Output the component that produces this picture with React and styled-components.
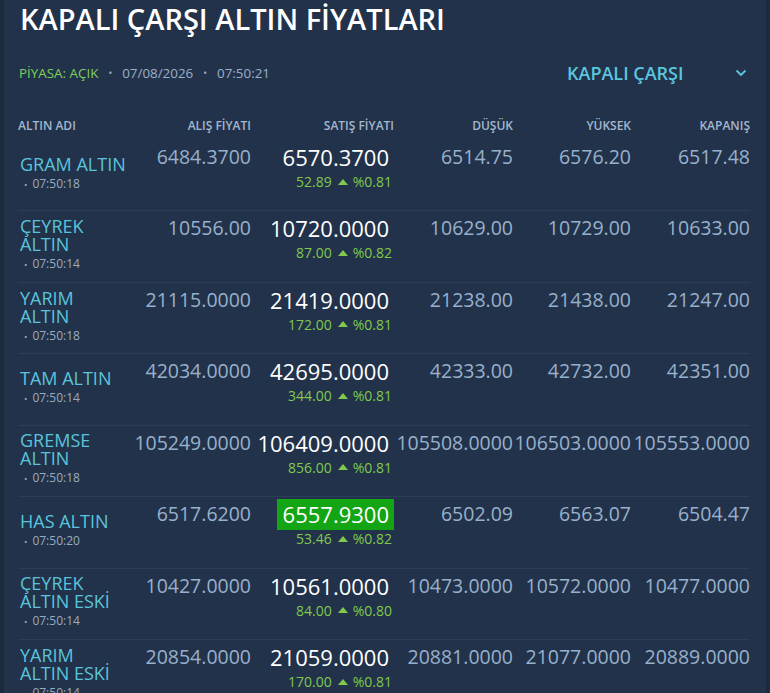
import React from 'react';
import styled, { createGlobalStyle } from 'styled-components';

const GlobalStyle = createGlobalStyle`
  html, body {
    margin: 0;
    padding: 0;
    background-color: #1d2a3d;
  }
  body {
    font-family: "Open Sans", "Noto Sans", sans-serif;
  }
`;

const Panel = styled.div`
  margin: 0 4px;
  padding: 0 16px 0 14px;
  min-height: 100vh;
  background-color: #22324a;
`;

const Title = styled.h1`
  margin: 0;
  padding-left: 2px;
  font-size: 29px;
  line-height: 38px;
  font-weight: 600;
  color: #ffffff;
`;

const StatusBar = styled.div`
  display: flex;
  align-items: center;
  justify-content: space-between;
  margin-top: 26px;
  height: 18px;
`;

const Status = styled.div`
  display: flex;
  align-items: center;
  padding-left: 1px;
  font-size: 13.4px;
  line-height: 18px;
  color: #9bb0c8;
`;

const Open = styled.span`
  color: #7fd05a;
`;

const Dot = styled.span`
  margin: 0 10px;
  font-size: 10px;
`;

const Select = styled.div`
  display: flex;
  align-items: center;
  justify-content: space-between;
  width: 180px;
  padding-right: 3px;
  font-size: 18px;
  font-weight: 600;
  color: #5ac6df;
`;

const Head = styled.div`
  display: grid;
  grid-template-columns: 115px 118px 143px 119px 118px 119px;
  margin-top: 36px;
  padding-bottom: 6px;
`;

const HeadCell = styled.div`
  font-size: 12px;
  line-height: 16px;
  font-weight: 600;
  color: #a3b7cf;
  text-align: ${(p) => (p.left ? 'left' : 'right')};
`;

const Row = styled.div`
  display: grid;
  grid-template-columns: 115px 118px 143px 119px 118px 119px;
  align-items: start;
  box-sizing: border-box;
  height: 71.45px;
  padding-top: 2px;
  border-bottom: 1px solid #2c3e57;
`;

const NameCell = styled.div`
  align-self: center;
  padding: 0 6px 0 2px;
  margin-top: -2px;
`;

const Name = styled.div`
  font-size: 18px;
  line-height: 18px;
  color: #5ac4dc;
`;

const Time = styled.div`
  font-size: 12px;
  line-height: 22px;
  color: #9aabbf;
  padding-left: 4px;

  &::before {
    content: '•';
    font-size: 9px;
    margin-right: 5px;
  }
`;

const Value = styled.div`
  font-size: 19.5px;
  line-height: 30px;
  color: #98b0cb;
  text-align: right;
  white-space: nowrap;
`;

const SellCell = styled.div`
  display: flex;
  flex-direction: column;
  align-items: flex-end;
`;

const Sell = styled.span`
  padding: 0 5px 0 6px;
  font-size: 22px;
  line-height: 31px;
  color: #ffffff;
  white-space: nowrap;
  background-color: ${(p) => (p.flash ? '#13a513' : 'transparent')};
`;

const Change = styled.div`
  display: flex;
  align-items: center;
  padding-right: 2px;
  font-size: 14px;
  line-height: 17px;
  color: #80c94d;
`;

const Up = styled.span`
  width: 0;
  height: 0;
  margin: 0 5px 0 6px;
  border-left: 5px solid transparent;
  border-right: 5px solid transparent;
  border-bottom: 6px solid #80c94d;
`;

const Chevron = () => (
  <svg width="12" height="8" viewBox="0 0 12 8" fill="none">
    <path d="M1.5 1.5 L6 6 L10.5 1.5" stroke="#5ac6df" strokeWidth="1.8" />
  </svg>
);

const rows = [
  { name: 'GRAM ALTIN', time: '07:50:18', buy: '6484.3700', sell: '6570.3700', diff: '52.89', pct: '%0.81', low: '6514.75', high: '6576.20', close: '6517.48' },
  { name: 'ÇEYREK ALTIN', time: '07:50:14', buy: '10556.00', sell: '10720.0000', diff: '87.00', pct: '%0.82', low: '10629.00', high: '10729.00', close: '10633.00' },
  { name: 'YARIM ALTIN', time: '07:50:18', buy: '21115.0000', sell: '21419.0000', diff: '172.00', pct: '%0.81', low: '21238.00', high: '21438.00', close: '21247.00' },
  { name: 'TAM ALTIN', time: '07:50:14', buy: '42034.0000', sell: '42695.0000', diff: '344.00', pct: '%0.81', low: '42333.00', high: '42732.00', close: '42351.00' },
  { name: 'GREMSE ALTIN', time: '07:50:18', buy: '105249.0000', sell: '106409.0000', diff: '856.00', pct: '%0.81', low: '105508.0000', high: '106503.0000', close: '105553.0000' },
  { name: 'HAS ALTIN', time: '07:50:20', buy: '6517.6200', sell: '6557.9300', diff: '53.46', pct: '%0.82', low: '6502.09', high: '6563.07', close: '6504.47', flash: true },
  { name: 'ÇEYREK ALTIN ESKİ', time: '07:50:14', buy: '10427.0000', sell: '10561.0000', diff: '84.00', pct: '%0.80', low: '10473.0000', high: '10572.0000', close: '10477.0000' },
  { name: 'YARIM ALTIN ESKİ', time: '07:50:14', buy: '20854.0000', sell: '21059.0000', diff: '170.00', pct: '%0.81', low: '20881.0000', high: '21077.0000', close: '20889.0000' },
];

const App = () => (
  <>
    <GlobalStyle />
    <Panel>
      <Title>KAPALI ÇARŞI ALTIN FİYATLARI</Title>
      <StatusBar>
        <Status>
          <Open>PİYASA: AÇIK</Open>
          <Dot>•</Dot>
          <span>07/08/2026</span>
          <Dot>•</Dot>
          <span>07:50:21</span>
        </Status>
        <Select>
          <span>KAPALI ÇARŞI</span>
          <Chevron />
        </Select>
      </StatusBar>
      <Head>
        <HeadCell left>ALTIN ADI</HeadCell>
        <HeadCell>ALIŞ FİYATI</HeadCell>
        <HeadCell>SATIŞ FİYATI</HeadCell>
        <HeadCell>DÜŞÜK</HeadCell>
        <HeadCell>YÜKSEK</HeadCell>
        <HeadCell>KAPANIŞ</HeadCell>
      </Head>
      {rows.map((r) => (
        <Row key={r.name}>
          <NameCell>
            <Name>{r.name}</Name>
            <Time>{r.time}</Time>
          </NameCell>
          <Value>{r.buy}</Value>
          <SellCell>
            <Sell flash={r.flash}>{r.sell}</Sell>
            <Change>
              {r.diff}
              <Up />
              {r.pct}
            </Change>
          </SellCell>
          <Value>{r.low}</Value>
          <Value>{r.high}</Value>
          <Value>{r.close}</Value>
        </Row>
      ))}
    </Panel>
  </>
);

export default App;
